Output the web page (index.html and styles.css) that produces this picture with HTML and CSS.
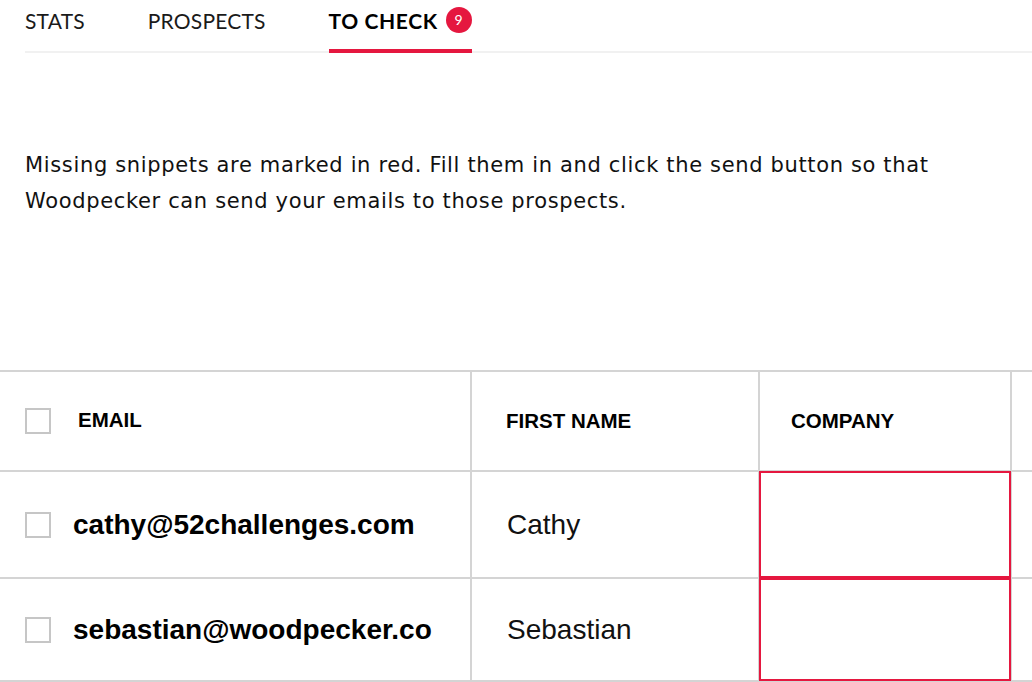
FILE: index.html
```html
<!DOCTYPE html>
<html>
<head>
<meta charset="utf-8">
<link rel="stylesheet" href="styles.css">
</head>
<body>
<div class="top">
  <nav class="tabs">
    <div class="tab">STATS</div>
    <div class="tab">PROSPECTS</div>
    <div class="tab active">TO CHECK <span class="badge">9</span></div>
  </nav>
  <p class="intro">Missing snippets are marked in red. Fill them in and click the send button so that<br>Woodpecker can send your emails to those prospects.</p>
</div>
<table class="grid">
  <colgroup>
    <col class="c1"><col class="c2"><col class="c3"><col class="c4">
  </colgroup>
  <thead>
    <tr class="head">
      <th class="first"><span class="check"></span><span class="hlabel">EMAIL</span></th>
      <th class="name">FIRST NAME</th>
      <th class="comp">COMPANY</th>
      <th></th>
    </tr>
  </thead>
  <tbody>
    <tr class="row r1">
      <td class="first"><span class="check"></span><span class="email">cathy@52challenges.com</span></td>
      <td class="name">Cathy</td>
      <td class="comp missing"></td>
      <td></td>
    </tr>
    <tr class="row r2">
      <td class="first"><span class="check"></span><span class="email">sebastian@woodpecker.co</span></td>
      <td class="name">Sebastian</td>
      <td class="comp missing"></td>
      <td></td>
    </tr>
  </tbody>
</table>
</body>
</html>
```
FILE: styles.css
```css
html, body {
  margin: 0;
  padding: 0;
  background: #fff;
  overflow: hidden;
}
body {
  width: 1032px;
  height: 682px;
  color: #111;
  font-family: "Lato", "DejaVu Sans", sans-serif;
}
.top {
  padding-left: 25px;
}
.tabs {
  display: flex;
  gap: 63px;
  height: 51px;
  border-bottom: 2px solid #f1f1f1;
}
.tab {
  display: flex;
  align-items: flex-start;
  padding-top: 10px;
  font-size: 21px;
  line-height: 22px;
  letter-spacing: 0.2px;
  color: #1a1a1a;
}
.tab.active {
  font-weight: 700;
  color: #000;
  letter-spacing: 0.6px;
  border-bottom: 4px solid #e5173f;
  margin-bottom: -2px;
  height: 39px;
}
.badge {
  display: inline-flex;
  align-items: center;
  justify-content: center;
  width: 26px;
  height: 26px;
  margin-left: 8px;
  margin-top: -3px;
  border-radius: 50%;
  background: #e5173f;
  color: #fff;
  font-size: 14px;
  font-weight: 400;
  letter-spacing: 0;
}
.intro {
  margin: 94px 0 0 0;
  font-family: "DejaVu Sans", sans-serif;
  font-size: 21px;
  letter-spacing: 0.65px;
  line-height: 36px;
  color: #111;
  white-space: nowrap;
}
.grid {
  margin-top: 151px;
  border-collapse: collapse;
  table-layout: fixed;
  width: 1100px;
  font-family: "Liberation Sans", Arial, sans-serif;
}
.c1 { width: 471px; }
.c2 { width: 288px; }
.c3 { width: 252px; }
.c4 { width: 89px; }
.grid th, .grid td {
  border: 2px solid #d4d4d4;
  padding: 0;
  text-align: left;
  vertical-align: middle;
}
.grid tr > :first-child { border-left: none; }
.head { height: 100px; }
.head th {
  font-size: 20.5px;
  font-weight: 700;
  color: #000;
}
.first {
  padding-left: 25px !important;
}
.first .check, .first .hlabel, .first .email {
  vertical-align: middle;
}
.check {
  display: inline-block;
  box-sizing: border-box;
  width: 26px;
  height: 26px;
  border: 2px solid #c6c6c6;
  background: #fff;
}
.hlabel {
  display: inline-block;
  margin-left: 27px;
  margin-top: -2px;
}
.head .name { padding-left: 34px; }
.head .comp { padding-left: 31px; }
.r1 { height: 107px; }
.r2 { height: 103px; }
.email {
  display: inline-block;
  margin-left: 22px;
  font-size: 28px;
  font-weight: 700;
  color: #000;
}
.row .name {
  padding-left: 35px;
  font-size: 28px;
  color: #111;
}
.missing {
  position: relative;
}
.missing::after {
  content: "";
  position: absolute;
  left: -1px;
  top: -1px;
  right: -1px;
  bottom: -1px;
  border: 2px solid #e5173f;
}
```
